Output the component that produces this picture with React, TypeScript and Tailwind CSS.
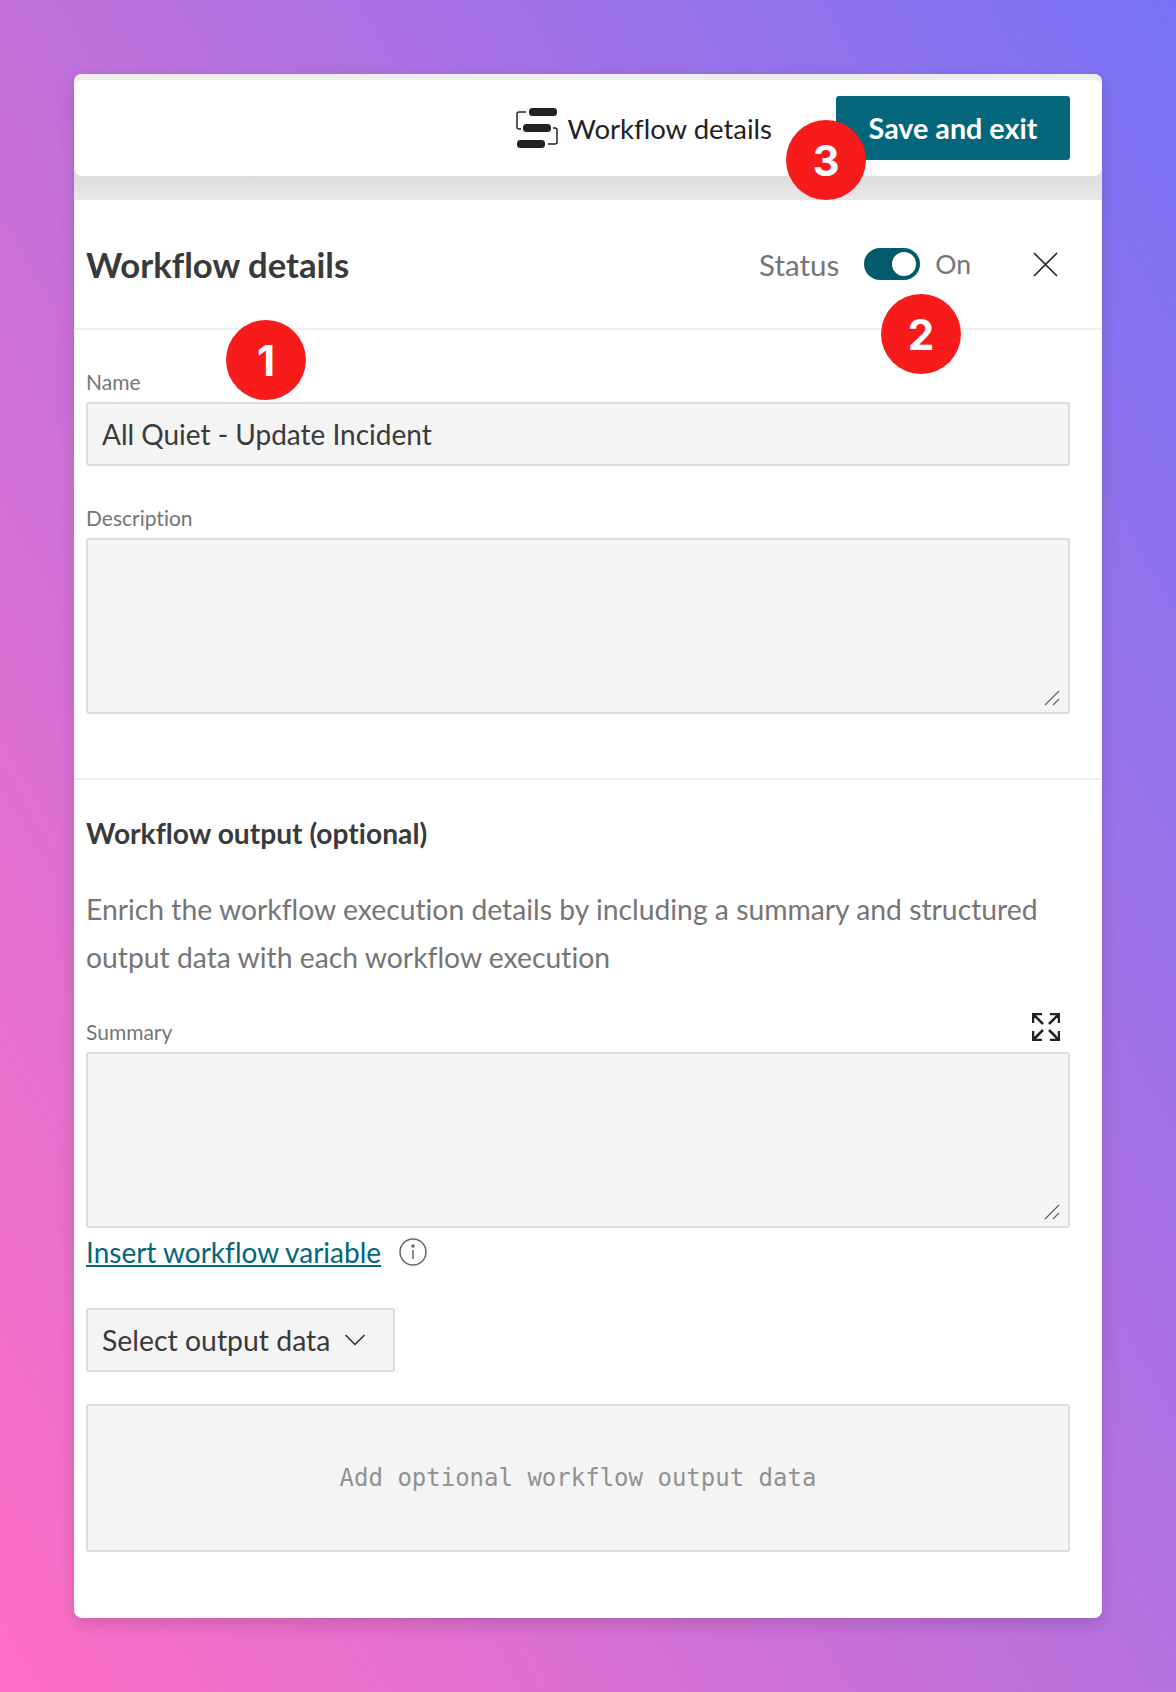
import { ChevronDown } from 'lucide-react';

const sans = "font-['Lato','Noto_Sans',sans-serif] [font-variant-ligatures:none]";

function Badge({ n, className }: { n: number; className: string }) {
  return (
    <div
      className={`absolute flex h-[80px] w-[80px] items-center justify-center rounded-full bg-[#f71b1b] text-[42px] font-bold text-white font-['Inter',sans-serif] ${className}`}
    >
      {n}
    </div>
  );
}

function Field({ label, children }: { label: string; children: React.ReactNode }) {
  return (
    <div>
      <div className="mb-[6px] text-[21px] leading-[28px] text-[#757575]">{label}</div>
      {children}
    </div>
  );
}

function Grip() {
  return (
    <svg className="absolute bottom-[6px] right-[8px]" width="16" height="16" viewBox="0 0 16 16">
      <path d="M1 15 15 1M9 15l6-6" stroke="#666" strokeWidth="1.3" fill="none" />
    </svg>
  );
}

function TextArea({ height }: { height: string }) {
  return <div className={`relative rounded-[3px] border-2 border-[#dcdcdc] bg-[#f4f4f4] ${height}`}><Grip /></div>;
}

export default function App() {
  return (
    <div className={`min-h-[1692px] bg-[linear-gradient(60deg,#ff6ec4,#7873f5)] p-[74px] ${sans}`}>
      <div className="relative h-[1544px] overflow-hidden rounded-[8px] bg-white shadow-[0_6px_16px_rgba(0,0,0,0.15)]">
        <div className="bg-[linear-gradient(to_bottom,#eeeeee_0,#eeeeee_6px,#dedede_102px,#e8e8e8_126px)] pb-[24px] pt-[6px]">
          <header className="flex h-[96px] items-center justify-end rounded-[8px] bg-white pr-[32px]">
            <svg width="42" height="40" viewBox="0 0 42 40" fill="none">
              <rect x="13" y="0" width="28" height="8" rx="3.5" fill="#222" />
              <rect x="7" y="16" width="28" height="8" rx="3.5" fill="#222" />
              <rect x="1" y="32" width="28" height="8" rx="3.5" fill="#222" />
              <path d="M10 4H3a2 2 0 0 0-2 2v13a2 2 0 0 0 2 2h2M32 36h7a2 2 0 0 0 2-2V22a2 2 0 0 0-2-2h-2" stroke="#222" strokeWidth="1.5" />
            </svg>
            <span className="ml-[10px] pt-[2px] text-[27.5px] text-[#222]">Workflow details</span>
            <button className="ml-[64px] flex h-[64px] w-[234px] items-center justify-center rounded-[3px] bg-[#04667a] pt-[2px] text-[28.7px] font-bold text-white">
              Save and exit
            </button>
          </header>
        </div>

        <div className="flex h-[130px] items-center border-b-2 border-[#eeeeee] pl-[12px] pr-[44px]">
          <h1 className="pt-[2px] text-[34.7px] font-bold text-[#3a3a3a]">Workflow details</h1>
          <div className="ml-auto flex items-center text-[#757575]">
            <span className="pt-[2px] text-[29.5px]">Status</span>
            <span className="ml-[25px] flex h-[32px] w-[56px] items-center justify-end rounded-full bg-[#025a6b] pr-[4px]">
              <span className="h-[24px] w-[24px] rounded-full bg-white" />
            </span>
            <span className="ml-[15px] pt-[2px] text-[26.5px]">On</span>
            <svg className="ml-[62px]" width="25" height="25" viewBox="0 0 25 25" fill="none" stroke="#222" strokeWidth="1.6">
              <path d="M1 1l23 23M24 1 1 24" />
            </svg>
          </div>
        </div>

        <div className="pl-[12px] pr-[32px] pt-[38px]">
          <Field label="Name">
            <div className="flex h-[64px] items-center rounded-[3px] border-2 border-[#dcdcdc] bg-[#f4f4f4] px-[14px] text-[28px] text-[#3a3a3a]">
              All Quiet - Update Incident
            </div>
          </Field>
          <div className="mt-[38px]">
            <Field label="Description">
              <TextArea height="h-[176px]" />
            </Field>
          </div>
        </div>

        <div className="mt-[64px] border-t-2 border-[#eeeeee] pl-[12px] pr-[32px] pt-[35px]">
          <h2 className="text-[28.2px] font-bold leading-[36px] text-[#3a3a3a]">Workflow output (optional)</h2>
          <p className="mt-[34px] text-[28.3px] leading-[48px] text-[#757575]">
            Enrich the workflow execution details by including a summary and structured output data with each workflow execution
          </p>
          <div className="relative mt-[37px]">
            <Field label="Summary">
              <TextArea height="h-[176px]" />
            </Field>
            <svg className="absolute right-[10px] top-[-5px]" width="28" height="28" viewBox="0 0 28 28" fill="none" stroke="#222" strokeWidth="2.5">
              <path d="M1 10V1h9M1 1l10 10M18 1h9v9M27 1 17 11M1 18v9h9M1 27l10-10M18 27h9v-9M27 27 17 17" />
            </svg>
          </div>
          <div className="mt-[4px] flex items-center">
            <a href="#" className="text-[28px] leading-[40px] text-[#04667a] underline">Insert workflow variable</a>
            <svg className="ml-[18px]" width="28" height="28" viewBox="0 0 28 28" fill="none" stroke="#666" strokeWidth="1.5">
              <circle cx="14" cy="14" r="13" />
              <path d="M14 12v9" />
              <circle cx="14" cy="8" r="1" fill="#666" />
            </svg>
          </div>
          <div className="mt-[36px] flex h-[64px] w-[309px] items-center rounded-[3px] border-2 border-[#dcdcdc] bg-[#f4f4f4] pl-[14px] text-[28.4px] text-[#3a3a3a]">
            Select output data
            <ChevronDown className="ml-[7px] text-[#333]" size={36} strokeWidth={1.1} />
          </div>
          <div className="mt-[32px] flex h-[148px] items-center justify-center rounded-[3px] border-2 border-[#dcdcdc] bg-[#f4f4f4] font-['DejaVu_Sans_Mono',monospace] text-[24px] text-[#919191]">
            Add optional workflow output data
          </div>
        </div>

        <Badge n={1} className="left-[152px] top-[246px]" />
        <Badge n={2} className="left-[807px] top-[220px]" />
        <Badge n={3} className="left-[712px] top-[46px]" />
      </div>
    </div>
  );
}
